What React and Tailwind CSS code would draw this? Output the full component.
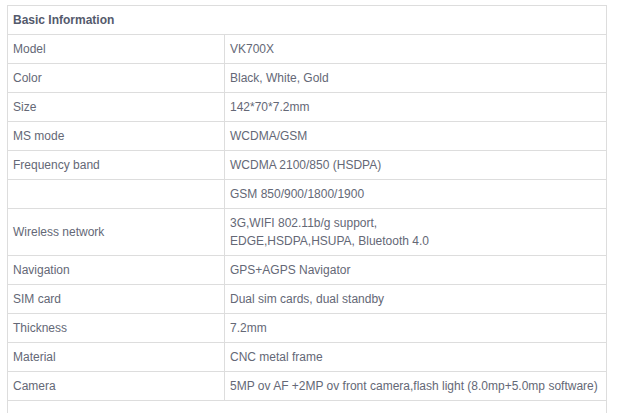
import React from "react";

const rows = [
  ["Model", ["VK700X"]],
  ["Color", ["Black, White, Gold"]],
  ["Size", ["142*70*7.2mm"]],
  ["MS mode", ["WCDMA/GSM"]],
  ["Frequency band", ["WCDMA 2100/850 (HSDPA)"]],
  ["", ["GSM 850/900/1800/1900"]],
  ["Wireless network", ["3G,WIFI 802.11b/g support,", "EDGE,HSDPA,HSUPA, Bluetooth 4.0"]],
  ["Navigation", ["GPS+AGPS Navigator"]],
  ["SIM card", ["Dual sim cards, dual standby"]],
  ["Thickness", ["7.2mm"]],
  ["Material", ["CNC metal frame"]],
  ["Camera", ["5MP ov AF +2MP ov front camera,flash light (8.0mp+5.0mp software)"]],
];

export default function App() {
  return (
    <div
      className="w-[620px] h-[413px] overflow-hidden bg-white pt-[5px] pl-[7px] text-[12px] leading-[18px] text-[#646876]"
      style={{ fontFamily: '"Liberation Sans", Arial, sans-serif' }}
    >
      <div className="w-[600px] border-l border-r border-t border-[#dddddd]">
        <div className="flex items-center h-[29px] border-b border-[#dddddd] pl-[5px] font-bold text-[#545a6c]">
          Basic Information
        </div>
        {rows.map(([label, val], i) => (
          <div key={i} className="flex border-b border-[#dddddd]">
            <div className="w-[216px] shrink-0 flex items-center pl-[5px] py-[5px]">{label}</div>
            <div className="flex-1 border-l border-[#dddddd] pl-[5px] py-[5px] flex flex-col justify-center">
              {val.map((v, j) => (
                <div key={j} className="whitespace-nowrap">{v}</div>
              ))}
            </div>
          </div>
        ))}
        <div className="h-[40px]"></div>
      </div>
    </div>
  );
}
